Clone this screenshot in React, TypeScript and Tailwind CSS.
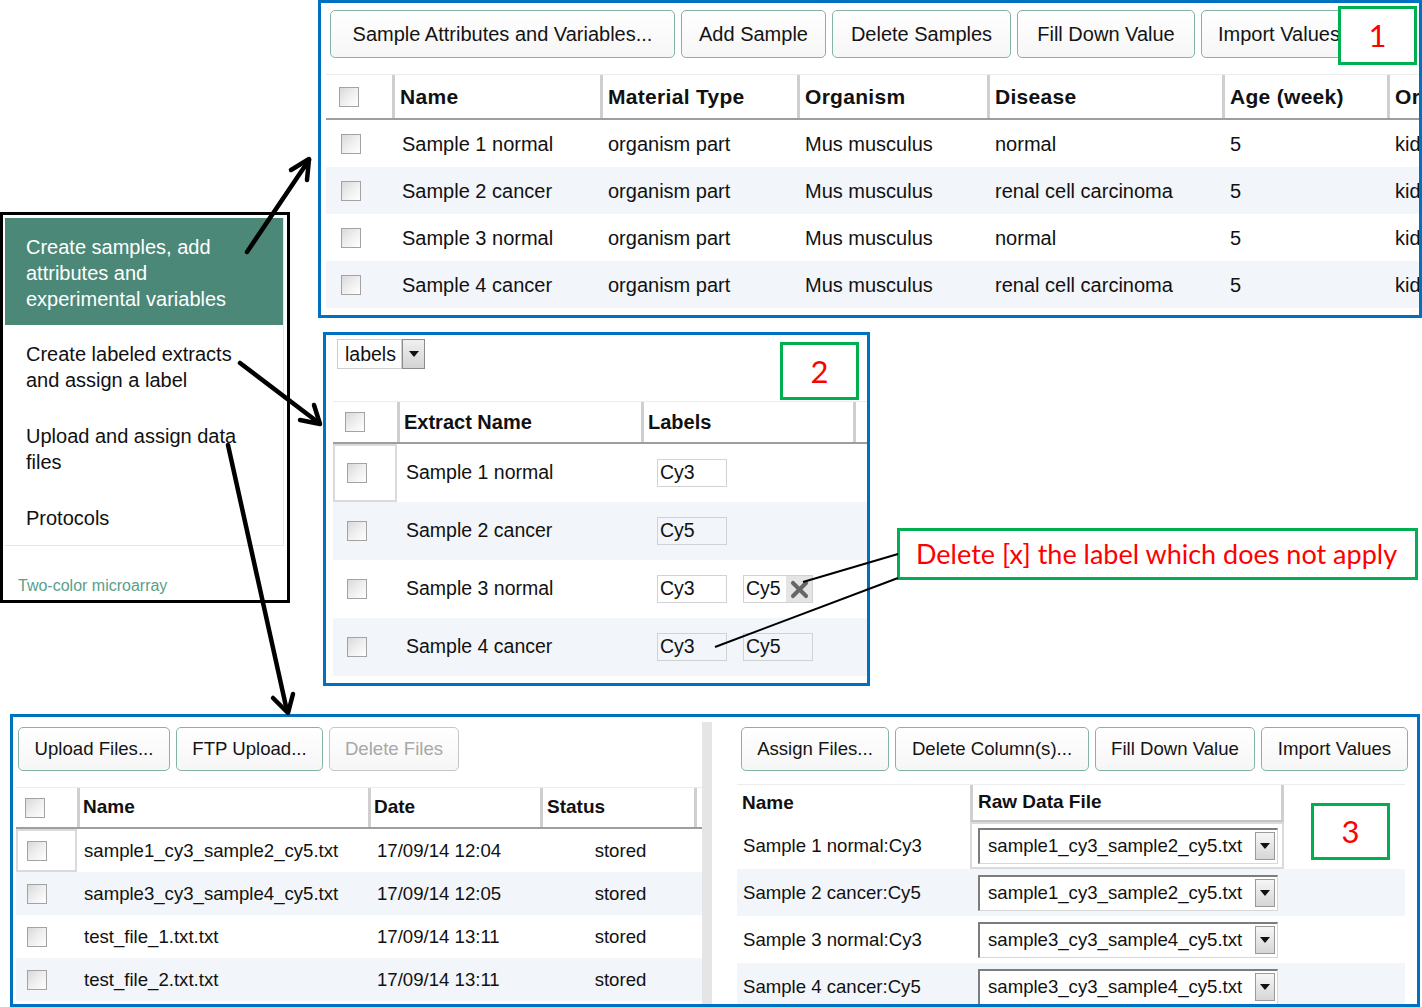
import React from "react";

type Kids = { children?: React.ReactNode };

function Check() {
  return <span className="block h-[20px] w-[20px] border border-[#a3a3a3] bg-linear-to-br from-[#d9d9d9] via-[#efefef] to-white" />;
}

function Btn({ className, children, off }: Kids & { className: string; off?: boolean }) {
  return (
    <div
      className={`flex shrink-0 items-center justify-center whitespace-nowrap rounded-[5px] border bg-linear-to-b from-white to-[#f6f6f6] ${
        off ? "border-[#c6c6c6] text-[#a8a8a8]" : "border-[#84b4a9] text-[#141414]"
      } ${className}`}
    >
      {children}
    </div>
  );
}

function Caret() {
  return (
    <svg width="10" height="6" viewBox="0 0 10 6">
      <polygon points="0,0 10,0 5,6" fill="#111" />
    </svg>
  );
}

function GreenTag({ className, children }: Kids & { className: string }) {
  return (
    <div
      className={`absolute flex items-center justify-center border-[3px] border-[#00b050] bg-white font-['Lato',sans-serif] text-[31px] text-[#ff0000] ${className}`}
    >
      {children}
    </div>
  );
}

const samples = [
  ["Sample 1 normal", "organism part", "Mus musculus", "normal", "5", "kidney"],
  ["Sample 2 cancer", "organism part", "Mus musculus", "renal cell carcinoma", "5", "kidney"],
  ["Sample 3 normal", "organism part", "Mus musculus", "normal", "5", "kidney"],
  ["Sample 4 cancer", "organism part", "Mus musculus", "renal cell carcinoma", "5", "kidney"],
];

const files = [
  ["sample1_cy3_sample2_cy5.txt", "17/09/14 12:04"],
  ["sample3_cy3_sample4_cy5.txt", "17/09/14 12:05"],
  ["test_file_1.txt.txt", "17/09/14 13:11"],
  ["test_file_2.txt.txt", "17/09/14 13:11"],
];

const assigned = [
  ["Sample 1 normal:Cy3", "sample1_cy3_sample2_cy5.txt"],
  ["Sample 2 cancer:Cy5", "sample1_cy3_sample2_cy5.txt"],
  ["Sample 3 normal:Cy3", "sample3_cy3_sample4_cy5.txt"],
  ["Sample 4 cancer:Cy5", "sample3_cy3_sample4_cy5.txt"],
];

function SamplesPanel() {
  return (
    <div className="absolute left-[318px] top-0 h-[318px] w-[1104px] overflow-hidden border-[3px] border-[#0070c0] bg-white">
      <div className="flex gap-[6px] pl-[9px] pt-[7px] text-[20px]">
        <Btn className="h-[48px] w-[345px]">Sample Attributes and Variables...</Btn>
        <Btn className="h-[48px] w-[145px]">Add Sample</Btn>
        <Btn className="h-[48px] w-[179px]">Delete Samples</Btn>
        <Btn className="h-[48px] w-[178px]">Fill Down Value</Btn>
        <Btn className="h-[48px] w-[170px] !justify-start pl-[16px]">Import Values</Btn>
      </div>
      <div className="ml-[5px] mt-[16px] w-[1200px] text-[20px] text-[#111]">
        <div className="grid h-[46px] grid-cols-[66px_208px_197px_190px_235px_165px_140px] border-b-2 border-t border-b-[#9e9e9e] border-t-[#ececec] text-[21px] font-bold tracking-[0.3px]">
          <div className="flex items-center pl-[13px]">
            <Check />
          </div>
          {["Name", "Material Type", "Organism", "Disease", "Age (week)", "Organism Part"].map((h) => (
            <div key={h} className="flex items-center whitespace-nowrap border-l-[3px] border-[#cfcfcf] pl-[5px]">
              {h}
            </div>
          ))}
        </div>
        {samples.map((r, i) => (
          <div
            key={i}
            className={`grid h-[47px] grid-cols-[66px_208px_197px_190px_235px_165px_140px] items-center ${
              i % 2 ? "bg-[#f2f5f9]" : "bg-white"
            }`}
          >
            <div className="pl-[15px]">
              <Check />
            </div>
            {r.map((c, j) => (
              <div key={j} className={`whitespace-nowrap ${j === 0 ? "pl-[10px]" : "pl-[8px]"}`}>
                {c}
              </div>
            ))}
          </div>
        ))}
      </div>
    </div>
  );
}

function LabelBox({ text, x }: { text: string; x?: boolean }) {
  return (
    <div className="flex h-[28px] w-[70px] items-center border border-[#d2d2d2]">
      <span className="pl-[2px]">{text}</span>
      {x && (
        <span className="ml-auto flex h-full w-[26px] items-center justify-center bg-[#e4e4e4]">
          <svg width="19" height="19" viewBox="0 0 16 16">
            <path d="M2.5 2.5 L13.5 13.5 M13.5 2.5 L2.5 13.5" stroke="#666" strokeWidth="3.4" strokeLinecap="round" />
          </svg>
        </span>
      )}
    </div>
  );
}

function ExtractsPanel() {
  const rows: [string, string[], boolean][] = [
    ["Sample 1 normal", ["Cy3"], false],
    ["Sample 2 cancer", ["Cy5"], false],
    ["Sample 3 normal", ["Cy3", "Cy5"], true],
    ["Sample 4 cancer", ["Cy3", "Cy5"], false],
  ];
  return (
    <div className="absolute left-[323px] top-[332px] h-[354px] w-[547px] overflow-hidden border-[3px] border-[#0070c0] bg-white text-[19.5px] text-[#111]">
      <div className="ml-[11px] mt-[4px] flex h-[30px] w-[88px]">
        <div className="flex flex-1 items-center border border-[#cfcfcf] pl-[7px] pt-[2px]">labels</div>
        <div className="flex w-[23px] items-center justify-center border border-[#8c8c8c] bg-linear-to-b from-[#f0f0f0] to-[#d4d4d4]">
          <Caret />
        </div>
      </div>
      <div className="ml-[7px] mt-[32px]">
        <div className="grid h-[43px] grid-cols-[64px_244px_215px_20px] border-b-2 border-t border-b-[#9e9e9e] border-t-[#ececec] text-[20px] font-bold">
          <div className="flex items-center pl-[12px]">
            <Check />
          </div>
          <div className="flex items-center border-l-[3px] border-[#cfcfcf] pl-[4px]">Extract Name</div>
          <div className="flex items-center border-x-[3px] border-[#cfcfcf] pl-[4px]">Labels</div>
          <div />
        </div>
        {rows.map(([name, labels, x], i) => (
          <div
            key={i}
            className={`grid h-[58px] grid-cols-[64px_244px_235px] items-center ${i % 2 ? "bg-[#f2f5f9]" : "bg-white"}`}
          >
            <div
              className={`flex h-full items-center border-2 pl-[12px] ${
                i === 0 ? "border-[#dadada]" : "border-transparent"
              }`}
            >
              <Check />
            </div>
            <div className="pl-[9px]">{name}</div>
            <div className="flex gap-[16px] pl-[16px]">
              {labels.map((l, j) => (
                <LabelBox key={j} text={l} x={x && j === 1} />
              ))}
            </div>
          </div>
        ))}
      </div>
    </div>
  );
}

function FileSelect({ v }: { v: string }) {
  return (
    <div className="flex h-[36px] w-[300px] items-center border-b border-l-2 border-r border-t-2 border-b-[#d8d8d8] border-l-[#7c7c7c] border-r-[#d8d8d8] border-t-[#7c7c7c] bg-white">
      <span className="whitespace-nowrap pl-[8px]">{v}</span>
      <span className="ml-auto mr-[2px] flex h-[28px] w-[20px] items-center justify-center border border-[#9a9a9a] bg-linear-to-b from-[#f6f6f6] to-[#d6d6d6]">
        <Caret />
      </span>
    </div>
  );
}

function FilesPanel() {
  return (
    <div className="absolute left-[10px] top-[714px] flex h-[293px] w-[1410px] overflow-hidden border-[3px] border-[#0070c0] bg-white text-[18.6px] text-[#111]">
      <div className="w-[689px] shrink-0">
        <div className="flex gap-[6px] pl-[5px] pt-[10px]">
          <Btn className="h-[44px] w-[152px]">Upload Files...</Btn>
          <Btn className="h-[44px] w-[147px]">FTP Upload...</Btn>
          <Btn className="h-[44px] w-[130px]" off>
            Delete Files
          </Btn>
        </div>
        <div className="ml-[3px] mt-[16px]">
          <div className="grid h-[42px] grid-cols-[61px_291px_172px_157px] border-b-2 border-t border-b-[#9e9e9e] border-t-[#ececec] text-[19px] font-bold">
            <div className="flex items-center pl-[9px]">
              <Check />
            </div>
            <div className="flex items-center border-l-[3px] border-[#cfcfcf] pl-[3px]">Name</div>
            <div className="flex items-center border-l-[3px] border-[#cfcfcf] pl-[3px]">Date</div>
            <div className="flex items-center border-x-[3px] border-[#cfcfcf] pl-[4px]">Status</div>
          </div>
          {files.map(([n, d], i) => (
            <div
              key={i}
              className={`grid h-[43px] grid-cols-[61px_291px_172px_157px] items-center ${
                i % 2 ? "bg-[#f2f5f9]" : "bg-white"
              }`}
            >
              <div
                className={`flex h-full items-center border-2 pl-[9px] ${
                  i === 0 ? "border-[#dadada]" : "border-transparent"
                }`}
              >
                <Check />
              </div>
              <div className="whitespace-nowrap pl-[7px]">{n}</div>
              <div className="pl-[9px]">{d}</div>
              <div className="pl-[4px] text-center">stored</div>
            </div>
          ))}
        </div>
      </div>
      <div className="mt-[5px] w-[10px] shrink-0 bg-[#e5e5e5]" />
      <div className="flex-1">
        <div className="flex gap-[6px] pl-[29px] pt-[10px]">
          <Btn className="h-[44px] w-[148px]">Assign Files...</Btn>
          <Btn className="h-[44px] w-[194px]">Delete Column(s)...</Btn>
          <Btn className="h-[44px] w-[160px]">Fill Down Value</Btn>
          <Btn className="h-[44px] w-[147px]">Import Values</Btn>
        </div>
        <div className="ml-[25px] mt-[13px] w-[668px]">
          <div className="grid h-[38px] grid-cols-[233px_314px] border-t border-[#ececec] text-[19px] font-bold">
            <div className="flex items-center pl-[5px]">Name</div>
            <div className="flex items-center border-b-2 border-x-[3px] border-b-[#c4c4c4] border-x-[#cfcfcf] pl-[5px]">
              Raw Data File
            </div>
          </div>
          {assigned.map(([n, f], i) => (
            <div
              key={i}
              className={`grid h-[47px] grid-cols-[233px_314px_1fr] items-center ${i % 2 ? "bg-[#f2f5f9]" : "bg-white"}`}
            >
              <div className="whitespace-nowrap pl-[6px]">{n}</div>
              <div
                className={`flex h-full items-center border-2 pl-[6px] ${
                  i === 0 ? "border-[#dadada]" : "border-transparent"
                }`}
              >
                <FileSelect v={f} />
              </div>
              <div />
            </div>
          ))}
        </div>
      </div>
    </div>
  );
}

function NavPanel() {
  return (
    <div className="absolute left-0 top-[212px] h-[391px] w-[290px] border-[3px] border-black bg-white text-[20px] leading-[26px]">
      <div className="ml-[2px] mt-[3px] w-[279px] border-b border-r border-[#e6e6e6]">
        <div className="bg-[#4b8878] pb-[13px] pl-[21px] pt-[16px] text-white">
          Create samples, add
          <br />
          attributes and
          <br />
          experimental variables
        </div>
        <div className="pb-[14px] pl-[21px] pt-[16px] text-[#111]">
          Create labeled extracts
          <br />
          and assign a label
        </div>
        <div className="pb-[14px] pl-[21px] pt-[16px] text-[#111]">
          Upload and assign data
          <br />
          files
        </div>
        <div className="pb-[14px] pl-[21px] pt-[16px] text-[#111]">Protocols</div>
      </div>
      <div className="mt-[30px] pl-[15px] text-[16px] leading-[20px] text-[#5a9e8c]">Two-color microarray</div>
    </div>
  );
}

function Arrows() {
  return (
    <svg className="pointer-events-none absolute left-0 top-0" width="1422" height="1007" viewBox="0 0 1422 1007">
      <g stroke="#000" strokeWidth="4.5" strokeLinecap="round" strokeLinejoin="round" fill="none">
        <path d="M247 252 L309 160" />
        <path d="M291 170 L309 159 L307 180" />
        <path d="M240 363 L319 423" />
        <path d="M300 420 L320 424 L314 405" />
        <path d="M228 445 L287 711" />
        <path d="M273 698 L288 713 L293 694" />
      </g>
      <g stroke="#000" strokeWidth="2" fill="none">
        <path d="M898 554 L803 582" />
        <path d="M898 578 L715 647" />
      </g>
    </svg>
  );
}

export default function App() {
  return (
    <div className="relative h-[1007px] w-[1422px] overflow-hidden bg-white font-['Liberation_Sans',Arial,sans-serif]">
      <SamplesPanel />
      <NavPanel />
      <ExtractsPanel />
      <FilesPanel />
      <GreenTag className="left-[1338px] top-[6px] h-[59px] w-[79px]">1</GreenTag>
      <GreenTag className="left-[780px] top-[342px] h-[58px] w-[79px]">2</GreenTag>
      <GreenTag className="left-[1311px] top-[803px] h-[57px] w-[79px]">3</GreenTag>
      <div className="absolute left-[897px] top-[528px] flex h-[52px] w-[521px] items-center whitespace-nowrap border-[3px] border-[#00b050] bg-white pl-[16px] font-['Lato',sans-serif] text-[27px] text-[#ff0000]">
        Delete [x] the label which does not apply
      </div>
      <Arrows />
    </div>
  );
}
